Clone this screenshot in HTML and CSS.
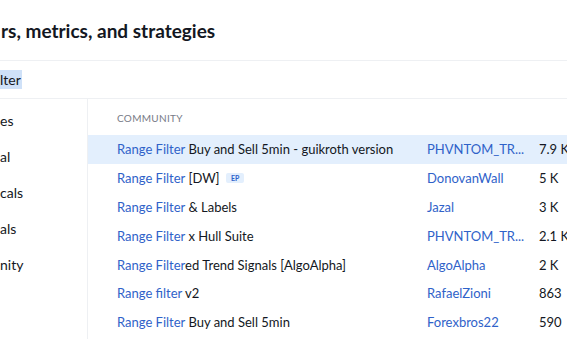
FILE: index.html
```html
<!DOCTYPE html>
<html lang="en">
<head>
  <meta charset="UTF-8">
  <title>Indicators, metrics, and strategies</title>
  <link rel="stylesheet" href="styles.css">
</head>
<body>
  <div class="dialog">
    <div class="header">
      <h2>rs, metrics, and strategies</h2>
    </div>
    <div class="search">
      <span class="query">lter</span>
    </div>
    <div class="content">
      <div class="sidebar">
        <div class="side-item">es</div>
        <div class="side-item">al</div>
        <div class="side-item">cals</div>
        <div class="side-item">als</div>
        <div class="side-item">nity</div>
      </div>
      <div class="results">
        <div class="section-title">COMMUNITY</div>
        <div class="row active">
          <div class="name"><span class="match">Range Filter</span> Buy and Sell 5min - guikroth version</div>
          <div class="author">PHVNTOM_TR...</div>
          <div class="count">7.9 K</div>
        </div>
        <div class="row">
          <div class="name"><span class="match">Range Filter</span> [DW] <span class="badge">EP</span></div>
          <div class="author">DonovanWall</div>
          <div class="count">5 K</div>
        </div>
        <div class="row">
          <div class="name"><span class="match">Range Filter</span> &amp; Labels</div>
          <div class="author">Jazal</div>
          <div class="count">3 K</div>
        </div>
        <div class="row">
          <div class="name"><span class="match">Range Filter</span> x Hull Suite</div>
          <div class="author">PHVNTOM_TR...</div>
          <div class="count">2.1 K</div>
        </div>
        <div class="row">
          <div class="name"><span class="match">Range Filter</span>ed Trend Signals [AlgoAlpha]</div>
          <div class="author">AlgoAlpha</div>
          <div class="count">2 K</div>
        </div>
        <div class="row">
          <div class="name"><span class="match">Range filter</span> v2</div>
          <div class="author">RafaelZioni</div>
          <div class="count">863</div>
        </div>
        <div class="row">
          <div class="name"><span class="match">Range Filter</span> Buy and Sell 5min</div>
          <div class="author">Forexbros22</div>
          <div class="count">590</div>
        </div>
      </div>
    </div>
  </div>
</body>
</html>
```

FILE: styles.css
```css
body {
  margin: 0;
  padding: 0;
  background-color: #fff;
  font-family: Lato, "Liberation Sans", sans-serif;
  color: #131722;
  overflow: hidden;
}

.dialog {
  width: 567px;
  height: 339px;
  overflow: hidden;
}

.header {
  height: 60px;
  border-bottom: 1px solid #eef0f3;
  display: flex;
  align-items: center;
}

h2 {
  margin: 0;
  padding-left: 1px;
  font-size: 19px;
  font-weight: bold;
  white-space: nowrap;
}

.search {
  height: 37px;
  border-bottom: 1px solid #eef0f3;
  display: flex;
  align-items: center;
  font-size: 14px;
}

.query {
  background-color: #cfe1f8;
  padding: 1px 1px 1px 0;
}

.content {
  display: flex;
}

.sidebar {
  flex-shrink: 0;
  width: 88px;
  border-right: 1px solid #eef0f3;
  height: 260px;
  padding-top: 11px;
  box-sizing: border-box;
}

.side-item {
  height: 36px;
  line-height: 21px;
  font-size: 14px;
}

.results {
  flex: 1;
  min-width: 0;
}

.section-title {
  height: 36px;
  line-height: 38px;
  padding-left: 29px;
  font-size: 10px;
  color: #787b86;
  letter-spacing: 0.3px;
}

.row {
  display: flex;
  align-items: center;
  height: 28.8px;
  font-size: 13px;
  white-space: nowrap;
}

.row.active {
  background-color: #e3effd;
}

.name {
  flex-shrink: 0;
  width: 339px;
  padding-left: 29px;
  box-sizing: border-box;
}

.match,
.author {
  color: #2f62c9;
}

.author {
  flex-shrink: 0;
  width: 112px;
}

.count {
  flex-shrink: 0;
}

.badge {
  display: inline-block;
  background-color: #e3effd;
  color: #2f62c9;
  font-size: 7px;
  font-weight: bold;
  padding: 1px 5px;
  border-radius: 2px;
  vertical-align: 2px;
  margin-left: 3px;
}
```
